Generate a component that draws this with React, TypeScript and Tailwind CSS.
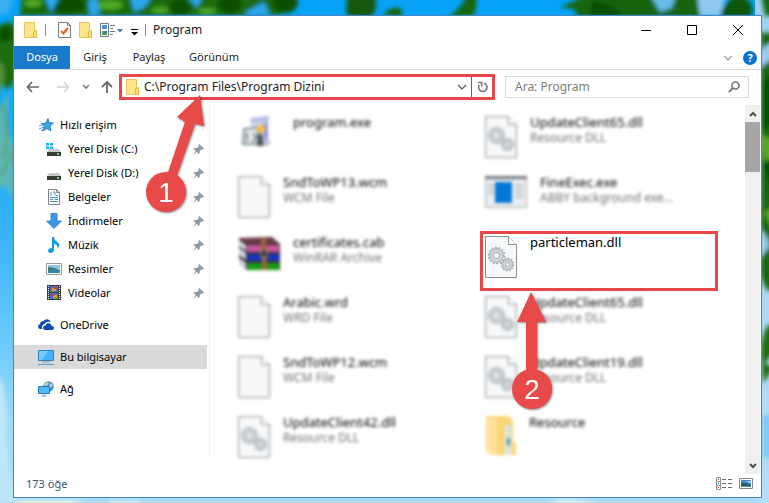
import type { ReactNode } from "react";
import { clsx } from "clsx";

type IconName = "page" | "dll" | "installer" | "archive" | "app" | "zip";

type FileEntry = {
  name: string;
  kind?: string;
  icon: IconName;
  active?: boolean;
};

const files: FileEntry[] = [
  { name: "program.exe", icon: "installer" },
  { name: "UpdateClient65.dll", kind: "Resource DLL", icon: "dll" },
  { name: "SndToWP13.wcm", kind: "WCM File", icon: "page" },
  { name: "FineExec.exe", kind: "ABBY background exe...", icon: "app" },
  { name: "certificates.cab", kind: "WinRAR Archive", icon: "archive" },
  { name: "particleman.dll", icon: "dll", active: true },
  { name: "Arabic.wrd", kind: "WRD File", icon: "page" },
  { name: "UpdateClient65.dll", kind: "Resource DLL", icon: "dll" },
  { name: "SndToWP12.wcm", kind: "WCM File", icon: "page" },
  { name: "UpdateClient19.dll", kind: "Resource DLL", icon: "dll" },
  { name: "UpdateClient42.dll", kind: "Resource DLL", icon: "dll" },
  { name: "Resource", icon: "zip" },
];

function gearPath(cx: number, cy: number, outer: number, inner: number, hole: number, teeth: number) {
  const points: string[] = [];
  const step = (Math.PI * 2) / teeth;
  for (let i = 0; i < teeth; i++) {
    const offsets = [
      [0, inner],
      [0.15, outer],
      [0.45, outer],
      [0.6, inner],
    ];
    for (const [o, r] of offsets) {
      const a = (i + o) * step;
      points.push(`${(cx + r * Math.cos(a)).toFixed(2)} ${(cy + r * Math.sin(a)).toFixed(2)}`);
    }
  }
  return `M${points.join("L")}ZM${cx - hole} ${cy}a${hole} ${hole} 0 1 0 ${hole * 2} 0a${hole} ${hole} 0 1 0 ${-hole * 2} 0Z`;
}

/* Wallpaper */

function Wallpaper() {
  return (
    <svg className="absolute inset-0 h-full w-full" viewBox="0 0 769 503" preserveAspectRatio="none" aria-hidden="true">
      <defs>
        <linearGradient id="sky" x1="0" y1="0" x2="0" y2="1">
          <stop offset="0" stopColor="#06a2f8" />
          <stop offset="0.45" stopColor="#35b1f5" />
          <stop offset="0.62" stopColor="#5cc4fb" />
          <stop offset="0.85" stopColor="#a0dcfa" />
          <stop offset="1" stopColor="#a9dbf8" />
        </linearGradient>
        <linearGradient id="haze" x1="0" y1="0" x2="0" y2="1">
          <stop offset="0" stopColor="#9fd0f5" />
          <stop offset="1" stopColor="#b4defa" />
        </linearGradient>
        <filter id="soft">
          <feGaussianBlur stdDeviation="2" />
        </filter>
      </defs>
      <rect width="769" height="503" fill="url(#sky)" />
      <rect x="755" width="14" height="503" fill="url(#haze)" />
      <g filter="url(#soft)">
        <path d="M-5 -5H14L9 12L-5 17Z" fill="#3aaef0" />
        <path d="M22 -6H298L292 12L270 16H20Z" fill="#1d6a0c" />
        <path d="M-5 30Q10 14 18 30V76L8 90L-5 75Z" fill="#1f6d10" />
        <path d="M-5 60Q6 62 4 80Q-1 98 -5 90Z" fill="#54903a" />
        <path d="M9 94Q4 130 14 145V205Q7 178 -5 190V112Z" fill="#69b9a7" opacity="0.8" />
        <path d="M2 104Q12 132 3 158M14 150Q5 168 0 176" stroke="#5d9b40" strokeWidth="2" fill="none" />
        <g fill="#075003">
          <ellipse cx="66" cy="5" rx="20" ry="9" />
          <ellipse cx="180" cy="7" rx="11" ry="8" />
          <ellipse cx="230" cy="4" rx="12" ry="10" />
          <ellipse cx="285" cy="2" rx="13" ry="11" />
          <ellipse cx="5" cy="34" rx="7" ry="8" />
        </g>
        <g fill="#4ea927">
          <ellipse cx="33" cy="3" rx="9" ry="4" />
          <ellipse cx="110" cy="5" rx="13" ry="5" />
          <ellipse cx="160" cy="10" rx="9" ry="3" />
          <ellipse cx="207" cy="11" rx="9" ry="3" />
        </g>
        <g fill="#2ba8ed">
          <path d="M44 -4L60 -4L51 13ZM88 2L96 -4L100 14L90 15ZM130 -4H152L145 7L134 12ZM187 -4H203L197 8ZM246 12L264 2L270 15H246Z" />
        </g>
        <path d="M347 16Q344 -4 352 -6H374Q380 10 369 18Z" fill="#15590a" />
        <path d="M383 16Q392 3 402 10V17Z" fill="#1b6310" />
        <path d="M448 17Q462 8 467 -5H476Q478 10 472 17Z" fill="#176609" />
        <path d="M560 7L588 -5H700L708 12L700 17H578L574 9Z" fill="#17650c" />
        <path d="M592 1Q615 3 622 16H590Z" fill="#0c4e05" />
        <path d="M650 -5H676L672 8L660 12Z" fill="#65bce8" />
        <path d="M697 -5H726L720 16H700Z" fill="#8fc7f1" />
        <path d="M720 17Q725 -3 740 -4Q757 1 751 17Z" fill="#0e5707" />
        <path d="M761 -5H775V16H765Z" fill="#176a10" />
        <path d="M761 32Q770 35 775 30V290Q766 296 761 275Z" fill="#1d670d" />
        <path d="M761 51Q768 41 775 44V57L761 67ZM761 230Q770 238 769 247L761 257Z" fill="#9ccceb" />
        <path d="M763 82L774 72V122L763 130ZM764 165L774 157V207Z" fill="#064f05" />
        <path d="M762 135L774 140V158L764 161ZM764 212L774 207V232Z" fill="#5da727" />
        <path d="M761 348Q764 322 774 324V352L765 363L774 368L763 383Z" fill="#206c10" />
        <path d="M-5 380Q5 370 7 420Q3 440 16 503H-5Z" fill="#bde7f9" />
        <path d="M20 500H85L65 508H10Z" fill="#d9f4ea" />
        <path d="M110 500H140V508H110ZM555 499Q580 494 600 506H548Z" fill="#c9eafd" />
        <path d="M762 415H774V458H762Z" fill="#83cafa" />
      </g>
    </svg>
  );
}

/* Small icons */

function FolderIcon() {
  return (
    <svg width="13" height="16" viewBox="0 0 13 16" aria-hidden="true">
      <path d="M.5.5H10.5V11H12.5V15.5H.5Z" fill="#ffe48b" stroke="#e8c45c" />
      <path d="M9.5 15.5V9.5L12.5 8.500V15.500Z" fill="#ffe07a" stroke="#e3b93e" />
    </svg>
  );
}

function StarIcon() {
  return (
    <svg width="15" height="14" viewBox="0 0 15 14" aria-hidden="true">
      <path d="M9 .5L10 4.500L14.500 5L11 8L12 13L8 10.500L3.500 13L5 8.500L2.500 5.500L7 5Z" fill="#35a7ea" stroke="#1d6fb4" strokeWidth=".8" />
      <path d="M0 8L4 6.500M0 11L4.500 9M2 13L5 11" stroke="#4f9fd4" strokeWidth="1" />
    </svg>
  );
}

function DriveIcon({ windows = false }: { windows?: boolean }) {
  return (
    <svg width="16" height="16" viewBox="0 0 16 16" aria-hidden="true">
      {windows && <path d="M0 2H3V4.500H0ZM4 2H7V4.500H4ZM0 5.500H3V8H0ZM4 5.500H7V8H4Z" fill="#18b0f2" />}
      <path d="M3 8H13L15 11H1Z" fill="#c9c9c9" />
      <path d="M1 11H15V15H1Z" fill="#3a3a3a" />
      <path d="M11 12H13V14H11Z" fill="#5ed45b" />
    </svg>
  );
}

function DocumentIcon() {
  return (
    <svg width="16" height="16" viewBox="0 0 16 16" aria-hidden="true">
      <path d="M2.500.5H10.500L13.500 3.500V15.500H2.500Z" fill="#fff" stroke="#858585" />
      <path d="M10.500.5V3.500H13.500" fill="none" stroke="#858585" />
      <path d="M4 6H5.500M4 4H6M7 3H9V6M9.500 6.500H12M4 8.500H12M4 10.500H7M8.500 10.500H12M4 12.500H12" stroke="#4493cf" fill="none" />
    </svg>
  );
}

function DownloadIcon() {
  return (
    <svg width="16" height="16" viewBox="0 0 16 16" aria-hidden="true">
      <path d="M5 .5H11V8H15.500L8 15.500L.5 8H5Z" fill="#3c97e6" stroke="#2377c8" strokeWidth=".8" />
    </svg>
  );
}

function MusicIcon() {
  return (
    <svg width="16" height="16" viewBox="0 0 16 16" aria-hidden="true">
      <path d="M6 0H8Q8 3 11.500 5Q15 8 11.500 12Q12.500 8 8 6.500V13Q7.500 16 4.500 16Q2 16 2 13.800Q2.200 11 6 11Z" fill="#109cee" />
    </svg>
  );
}

function PictureIcon() {
  return (
    <svg width="16" height="12" viewBox="0 0 16 12" aria-hidden="true">
      <path d="M.5.5H15.500V11.500H.5Z" fill="#fff" stroke="#9a9a9a" />
      <path d="M2 2H14V6H2Z" fill="#8bc6ef" />
      <path d="M2 4Q7 4 14 7V8H2Z" fill="#3d8170" />
      <path d="M2 7.500H14V10H2Z" fill="#3287b7" />
    </svg>
  );
}

function VideoIcon() {
  return (
    <svg width="16" height="16" viewBox="0 0 16 16" aria-hidden="true">
      <path d="M1 0H15V15H1Z" fill="#3c3c3c" />
      <path d="M2.500 1V15M13.500 1V15" stroke="#fff" strokeDasharray="1 1" />
      <path d="M4 1H12V7H4ZM4 8H12V14H4Z" fill="#4a6fd0" />
      <path d="M6 3H10V6H6ZM7 10H11V13H7Z" fill="#d99d2a" />
      <path d="M8 2H11V4H8ZM5 9H8V11H5Z" fill="#c83d2a" />
      <path d="M4 6H8V7H4ZM8 13H12V14H8Z" fill="#3aa343" />
    </svg>
  );
}

function CloudIcon() {
  return (
    <svg width="16" height="12" viewBox="0 0 16 12" aria-hidden="true">
      <path d="M4 10H2Q0 9.500 0 7.500Q0 5.500 2 5Q2.500 2 5.500 2Q7 0 9.500.3Q12 .8 12.700 3Q8 2 6.500 5Q3.500 5.500 4 10Z" fill="#0b4db3" />
      <path d="M7 11Q5 10.500 5 8.700Q5.200 6.500 7.500 6.500Q8.200 4 10.500 4Q13 4 13.500 6.700Q16 6.900 16 9Q15.900 11 14 11Z" fill="#0b4db3" />
    </svg>
  );
}

function ComputerIcon() {
  return (
    <svg width="16" height="15" viewBox="0 0 16 15" aria-hidden="true">
      <path d="M.5.5H15.500V10.500H.5Z" fill="#43b4fa" stroke="#347fb1" />
      <path d="M1 1H10L4 10H1Z" fill="#75ccff" />
      <path d="M4 12H12M0 14.500H16" stroke="#6998b7" />
    </svg>
  );
}

function NetworkIcon() {
  return (
    <svg width="16" height="16" viewBox="0 0 16 16" aria-hidden="true">
      <circle cx="10.500" cy="5.500" r="5.300" fill="#4f8fb2" />
      <path d="M6 3Q9 0 11 2L9 5L7 6ZM12 2L15 4L13 7L11 5Z" fill="#a9d2da" />
      <path d="M.5 5.500H11.500V12.500H.5Z" fill="#4fb9f6" stroke="#2876aa" />
      <path d="M3 15H9M6 13V15" stroke="#74a5c2" />
    </svg>
  );
}

function PinIcon() {
  return (
    <svg className="text-[#8d99a3]" width="11" height="11" viewBox="0 0 11 11" aria-hidden="true">
      <path d="M6 0L11 4.500L10 5.500L9 5L6.800 7.200L6.500 9.500L5.500 10L3.500 7.800L.5 10.800L0 10.400L2.800 7L.8 5L1.500 4L4 4L6 2L5.500 1Z" fill="currentColor" />
    </svg>
  );
}

/* Large file icons */

function PageShape() {
  return (
    <>
      <path d="M.5.5H23.500L31.500 8.500V41.500H.5Z" fill="#f7f8f9" stroke="#8b9093" />
      <path d="M23.500.5V8.500H31.500" fill="#fff" stroke="#8b9093" />
    </>
  );
}

function FileIcon({ icon }: { icon: IconName }) {
  switch (icon) {
    case "page":
      return (
        <svg width="32" height="42" viewBox="0 0 32 42" aria-hidden="true">
          <PageShape />
        </svg>
      );
    case "dll":
      return (
        <svg width="32" height="42" viewBox="0 0 32 42" aria-hidden="true">
          <PageShape />
          <g fill="#cfd5d9" stroke="#8c979e" strokeWidth=".7" fillRule="evenodd">
            <path d={gearPath(11.5, 19.5, 8.5, 6.5, 3, 14)} />
            <path d={gearPath(22.5, 28.5, 6.5, 4.8, 2, 12)} />
          </g>
        </svg>
      );
    case "installer":
      return (
        <svg width="42" height="42" viewBox="0 0 42 42" aria-hidden="true">
          <path d="M12 3L31 0L29 14L30 29H16Z" fill="#cfd1ea" />
          <path d="M13 2L31 0L30 5L14 6Z" fill="#b3b9e4" />
          <path d="M25 8L30 6V27L26 22Z" fill="#8d99d6" />
          <path d="M6 13L20 12V28H5Z" fill="#e5ecec" stroke="#7f9091" strokeWidth="2" />
          <path d="M9 17V25M15 17L18 21L15 26" stroke="#72898b" strokeWidth="2" fill="none" />
          <circle cx="23" cy="13" r="4" fill="#f6bc47" />
          <path d="M20 18H24L26 30H19Z" fill="#4a565c" />
          <path d="M27 27L34 24L30 30H25Z" fill="#c4c4c4" />
        </svg>
      );
    case "archive":
      return (
        <svg width="42" height="36" viewBox="0 0 42 36" aria-hidden="true">
          <path d="M1 2L34 1L42 8V34H9L1 28Z" fill="#403138" />
          <path d="M1 2H34L41 7H9Z" fill="#703a4b" />
          <path d="M9 9H41V16H9Z" fill="#c957a0" />
          <path d="M9 18H41V25H9Z" fill="#1831bc" />
          <path d="M9 27H41V34H9Z" fill="#169c16" />
          <path d="M1 4L8 9V15L1 10ZM1 12L8 17V24L1 19ZM1 22L8 27V33L1 28Z" fill="#d4d8e2" />
          <path d="M23 1H28L29 34H24Z" fill="#9a643a" />
          <path d="M23 14H29V21H23Z" fill="#353535" stroke="#bba26a" />
        </svg>
      );
    case "app":
      return (
        <svg width="42" height="32" viewBox="0 0 42 32" aria-hidden="true">
          <path d="M.5.5H41.500V31.500H.5Z" fill="#eceeef" stroke="#9da3a7" />
          <path d="M0 0H42V3H0Z" fill="#6f767b" />
          <path d="M3 9H9M3 13H9M3 17H9M30 9H38M30 13H38M30 17H38M30 21H38" stroke="#bcc2c7" strokeWidth="2" />
          <path d="M10 6H27V27H10Z" fill="#0078d9" />
        </svg>
      );
    case "zip":
      return (
        <svg width="31" height="42" viewBox="0 0 31 42" aria-hidden="true">
          <path d="M1 0H24L28 5V25L31 27V39H7L1 34Z" fill="#f9d675" />
          <path d="M1 0L12 4V39H7L1 34Z" fill="#ffe196" />
          <path d="M20 9H26V39H20Z" fill="#e5edf0" />
          <path d="M22 22L25 22V29H22Z" fill="#388bc1" />
          <path d="M23.500 9V38" stroke="#88a5ae" strokeDasharray="2 2" />
        </svg>
      );
  }
}

/* Window parts */

function TitleBar() {
  return (
    <div className="flex h-[30px] shrink-0 items-center pb-[2px]">
      <div className="flex flex-1 items-center pl-[10px]">
        <FolderIcon />
        <span className="mx-2 h-3 w-px bg-[#8e8e8e]" />
        <div className="ml-1 flex items-center gap-2">
          <button type="button" aria-label="Özellikler">
            <svg width="13" height="16" viewBox="0 0 13 16" aria-hidden="true">
              <path d="M.5.5H9.500L12.500 3.500V15.500H.5Z" fill="#fff" stroke="#7c7c7c" />
              <path d="M9.500.5V3.500H12.500" fill="none" stroke="#7c7c7c" />
              <path d="M3 9L5.500 11.500L10 6" fill="none" stroke="#e95a24" strokeWidth="2" />
            </svg>
          </button>
          <button type="button" aria-label="Yeni klasör">
            <FolderIcon />
          </button>
          <button type="button" aria-label="Görünüm seçenekleri">
            <svg width="23" height="16" viewBox="0 0 23 16" aria-hidden="true">
              <path d="M.5 1.500H8.500V14.500H.5Z" fill="#fff" stroke="#777" />
              <path d="M2 3H7V7H2Z" fill="#4594d9" />
              <path d="M2 9H7V13H2Z" fill="#4da44c" />
              <path d="M4 9H7V11H4Z" fill="#3475ca" />
              <path d="M10 3.500H15M10 6.500H13M10 9.500H15M10 12.500H13" stroke="#777" />
              <path d="M17 7H23L20 10.500Z" fill="#3f78b0" />
            </svg>
          </button>
          <button type="button" aria-label="Araç çubuğunu özelleştir">
            <svg width="7" height="12" viewBox="0 0 7 12" aria-hidden="true">
              <path d="M0 5.500H7" stroke="#000" />
              <path d="M0 8H7L3.500 11.500Z" fill="#000" />
            </svg>
          </button>
        </div>
        <span className="mx-[7px] h-3 w-px bg-[#8e8e8e]" />
        <h1 className="text-xs leading-4 text-[#222]">Program</h1>
      </div>
      <button type="button" aria-label="Simge durumuna küçült" className="flex w-[46px] justify-center">
        <svg width="10" height="10" viewBox="0 0 10 10" aria-hidden="true">
          <path d="M0 5.500H10" stroke="#000" />
        </svg>
      </button>
      <button type="button" aria-label="Ekranı kapla" className="flex w-[46px] justify-center">
        <svg width="10" height="10" viewBox="0 0 10 10" aria-hidden="true">
          <path d="M.5.5H9.500V9.500H.5Z" fill="none" stroke="#000" />
        </svg>
      </button>
      <button type="button" aria-label="Kapat" className="flex w-[46px] justify-center">
        <svg width="10" height="10" viewBox="0 0 10 10" aria-hidden="true">
          <path d="M0 0L10 10M10 0L0 10" stroke="#000" />
        </svg>
      </button>
    </div>
  );
}

function Ribbon() {
  return (
    <div className="flex h-6 shrink-0 items-center border-b border-[#dadbdc] pr-1 text-[11px] text-[#222]">
      <button type="button" className="h-full w-14 bg-[#1979ca] text-white">
        Dosya
      </button>
      <button type="button" className="w-[50px]">
        Giriş
      </button>
      <button type="button" className="w-[58px]">
        Paylaş
      </button>
      <button type="button" className="w-[72px]">
        Görünüm
      </button>
      <div className="ml-auto flex items-center gap-[11px]">
        <button type="button" aria-label="Şeridi genişlet">
          <svg width="8" height="6" viewBox="0 0 8 6" aria-hidden="true">
            <path d="M0 1L4 5L8 1" fill="none" stroke="#949494" strokeWidth="1.200" />
          </svg>
        </button>
        <button
          type="button"
          aria-label="Yardım"
          className="size-[14px] rounded-full bg-[#0874cf] text-center text-[11px] leading-[14px] font-bold text-white"
        >
          ?
        </button>
      </div>
    </div>
  );
}

function AddressRow() {
  return (
    <div className="flex h-[35px] shrink-0 items-center px-3 pb-[2px]">
      <button type="button" aria-label="Geri" className="mr-4">
        <svg width="14" height="12" viewBox="0 0 14 12" aria-hidden="true">
          <path d="M6 1L1.500 6L6 11M1.500 6H13" fill="none" stroke="#686868" strokeWidth="1.700" />
        </svg>
      </button>
      <button type="button" aria-label="İleri" className="mr-3">
        <svg width="14" height="12" viewBox="0 0 14 12" aria-hidden="true">
          <path d="M8 1L12.500 6L8 11M12.500 6H1" fill="none" stroke="#d2d2d2" strokeWidth="1.500" />
        </svg>
      </button>
      <button type="button" aria-label="Son konumlar" className="mr-[10px]">
        <svg width="8" height="6" viewBox="0 0 8 6" aria-hidden="true">
          <path d="M1 1L4 4L7 1" fill="none" stroke="#7b7b7b" strokeWidth="1.600" />
        </svg>
      </button>
      <button type="button" aria-label="Yukarı" className="mr-[5px]">
        <svg width="14" height="12" viewBox="0 0 14 12" aria-hidden="true">
          <path d="M2 6L7 1L12 6M7 1V12" fill="none" stroke="#686868" strokeWidth="1.800" />
        </svg>
      </button>
      <div className="flex h-[26px] flex-1 items-center border-3 border-[#e8474a] pl-1">
        <FolderIcon />
        <input
          aria-label="Adres"
          defaultValue="C:\Program Files\Program Dizini"
          className="ml-[5px] min-w-0 flex-1 text-xs leading-4 text-[#222] outline-none"
        />
        <button type="button" aria-label="Önceki konumlar" className="mr-1">
          <svg width="10" height="6" viewBox="0 0 10 6" aria-hidden="true">
            <path d="M1 1L5 5L9 1" fill="none" stroke="#555" strokeWidth="1.200" />
          </svg>
        </button>
        <button type="button" aria-label="Yenile" className="flex h-full w-[21px] items-center justify-center border-l border-[#1979ca]">
          <svg width="11" height="12" viewBox="0 0 11 12" aria-hidden="true">
            <path d="M7 2.300A4.200 4.200 0 1 1 2.300 4" fill="none" stroke="#777" strokeWidth="1.600" />
            <path d="M1 1.500H4.700V5.500" fill="none" stroke="#777" strokeWidth="1.600" />
          </svg>
        </button>
      </div>
      <div className="ml-[10px] flex h-[22px] w-[244px] items-center border border-[#d9d9d9] pr-2 pl-[9px]">
        <input
          aria-label="Ara"
          placeholder="Ara: Program"
          className="min-w-0 flex-1 text-xs leading-4 outline-none placeholder:text-[#7d7d7d]"
        />
        <svg width="12" height="12" viewBox="0 0 12 12" aria-hidden="true">
          <circle cx="7.500" cy="4.500" r="3.500" fill="none" stroke="#777" strokeWidth="1.600" />
          <path d="M5 7L.8 11.200" stroke="#777" strokeWidth="1.900" />
        </svg>
      </div>
    </div>
  );
}

function NavItem({ icon, label, pinned = false, selected = false }: { icon: ReactNode; label: string; pinned?: boolean; selected?: boolean }) {
  return (
    <a
      href="#"
      className={clsx("flex h-6 items-center gap-[6px] pr-[3px] text-[11px] text-black", pinned ? "pl-8" : "pl-6", selected && "bg-[#d9d9d9]")}
    >
      <span className="flex w-4 shrink-0 justify-center">{icon}</span>
      <span className="flex-1">{label}</span>
      {pinned && <PinIcon />}
    </a>
  );
}

function Sidebar() {
  return (
    <nav aria-label="Gezinti" className="mb-[18px] flex w-[196px] shrink-0 flex-col gap-2 border-r border-[#f0f0f0] pt-2 pr-[2px]">
      <div>
        <NavItem icon={<StarIcon />} label="Hızlı erişim" />
        <NavItem icon={<DriveIcon windows />} label="Yerel Disk (C:)" pinned />
        <NavItem icon={<DriveIcon />} label="Yerel Disk (D:)" pinned />
        <NavItem icon={<DocumentIcon />} label="Belgeler" pinned />
        <NavItem icon={<DownloadIcon />} label="İndirmeler" pinned />
        <NavItem icon={<MusicIcon />} label="Müzik" pinned />
        <NavItem icon={<PictureIcon />} label="Resimler" pinned />
        <NavItem icon={<VideoIcon />} label="Videolar" pinned />
      </div>
      <NavItem icon={<CloudIcon />} label="OneDrive" />
      <NavItem icon={<ComputerIcon />} label="Bu bilgisayar" selected />
      <NavItem icon={<NetworkIcon />} label="Ağ" />
    </nav>
  );
}

function FileTile({ file }: { file: FileEntry }) {
  return (
    <li className="relative h-[42px]">
      <div className={clsx("flex items-start gap-[13px]", !file.active && "blur-[1px] *:blur-[1px]")}>
        <FileIcon icon={file.icon} />
        <div className="-mt-[2px] min-w-0">
          <p className="truncate text-[13px] leading-4 text-black">{file.name}</p>
          {file.kind && <p className="truncate text-xs leading-4 text-[#707070]">{file.kind}</p>}
        </div>
      </div>
      {file.active && <span className="absolute -top-[5px] right-[14px] -left-[5px] h-[60px] border-3 border-[#e8474a]" />}
    </li>
  );
}

function ScrollBar() {
  return (
    <div className="mr-px flex w-[15px] shrink-0 flex-col bg-[#f0f0f0]">
      <button type="button" aria-label="Yukarı kaydır" className="flex h-[17px] items-center justify-center">
        <svg width="8" height="6" viewBox="0 0 8 6" aria-hidden="true">
          <path d="M1 5L4 2L7 5" fill="none" stroke="#505050" strokeWidth="2" />
        </svg>
      </button>
      <span className="h-[50px] bg-[#a6a6a6]" />
      <button type="button" aria-label="Aşağı kaydır" className="mt-auto flex h-[17px] items-center justify-center">
        <svg width="8" height="6" viewBox="0 0 8 6" aria-hidden="true">
          <path d="M1 1L4 4L7 1" fill="none" stroke="#505050" strokeWidth="2" />
        </svg>
      </button>
    </div>
  );
}

function StatusBar() {
  return (
    <div className="flex h-[23px] shrink-0 items-center pr-2 pb-1 pl-3">
      <p className="flex-1 text-[11px] leading-4 text-[#43536f]">173 öğe</p>
      <div className="flex items-center gap-[7px]">
        <button type="button" aria-label="Ayrıntılar">
          <svg width="16" height="13" viewBox="0 0 16 13" aria-hidden="true">
            <path d="M.5.5H4.500V12.500H.5ZM.5 4.500H4.500M.5 8.500H4.500" fill="none" stroke="#909090" />
            <path d="M6 2.500H10M12 2.500H16M6 6.500H10M12 6.500H16M6 10.500H10M12 10.500H16" stroke="#6d6d6d" />
            <path d="M2 2H3V3H2Z" fill="#555" />
            <path d="M2 6H3V7H2Z" fill="#2876c8" />
            <path d="M2 10H3V11H2Z" fill="#e22" />
          </svg>
        </button>
        <button type="button" aria-label="Büyük simgeler">
          <svg width="14" height="11" viewBox="0 0 14 11" aria-hidden="true">
            <path d="M.5.5H13.500V10.500H.5Z" fill="#fff" stroke="#858585" />
            <path d="M2 2H12V9H2Z" fill="#478bd0" />
            <path d="M2 5Q6 4 12 7V8H2Z" fill="#225f58" />
            <path d="M7 3H12V5Z" fill="#b9dcf5" />
          </svg>
        </button>
      </div>
    </div>
  );
}

/* Numbered pointers lying over the window */

function Pointers() {
  return (
    <>
      <svg className="absolute top-[90px] left-[140px] drop-shadow-[1px_1px_1px_rgba(0,0,0,0.45)]" width="75" height="130" viewBox="140 90 75 130">
        <path d="M200 95L204 126L195 124L176 178L167 175L185 122L177 117Z" fill="#e84a4a" />
        <circle cx="166" cy="192" r="20" fill="#e84a4a" />
        <text x="166" y="202" textAnchor="middle" fontSize="28" fill="#fff" className="font-['Liberation_Sans',sans-serif]">
          1
        </text>
      </svg>
      <svg className="absolute top-[285px] left-[505px] drop-shadow-[1px_1px_1px_rgba(0,0,0,0.45)]" width="55" height="130" viewBox="505 285 55 130">
        <path d="M531 292L546 322H537V375H526V322H517Z" fill="#e84a4a" />
        <circle cx="532" cy="389" r="20" fill="#e84a4a" />
        <text x="532" y="399" textAnchor="middle" fontSize="28" fill="#fff" className="font-['Liberation_Sans',sans-serif]">
          2
        </text>
      </svg>
    </>
  );
}

export default function App() {
  return (
    <div className="relative flex min-h-screen flex-col overflow-hidden pt-[15px] pr-[7px] pb-[5px] pl-[13px] font-['Noto_Sans',sans-serif]">
      <Wallpaper />
      <main className="relative flex flex-1 flex-col border border-[#4583c4] bg-white">
        <TitleBar />
        <Ribbon />
        <AddressRow />
        <div className="flex flex-1">
          <Sidebar />
          <ul className="grid min-w-0 flex-1 grid-cols-2 content-start gap-y-[18px] pt-[11px] pr-[13px] pl-7">
            {files.map((file, i) => (
              <FileTile key={i} file={file} />
            ))}
          </ul>
          <ScrollBar />
        </div>
        <StatusBar />
      </main>
      <Pointers />
    </div>
  );
}
